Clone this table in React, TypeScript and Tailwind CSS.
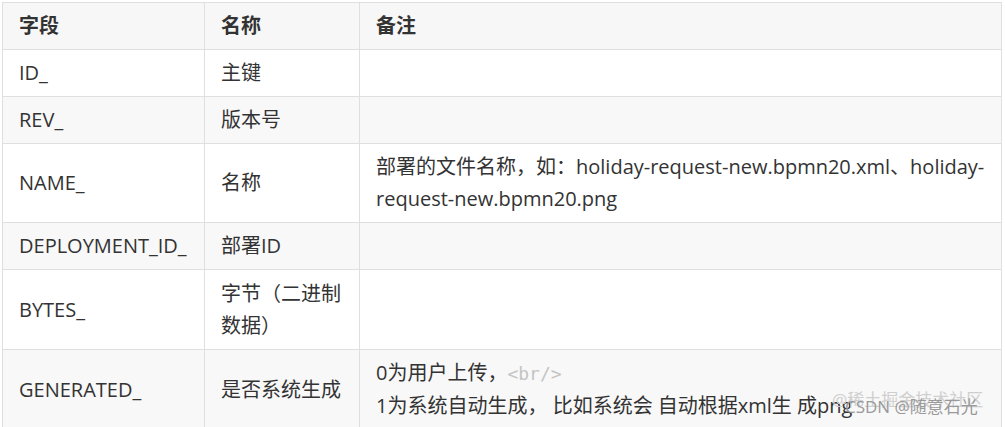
import React from "react";

const font = {
  fontFamily: '"Open Sans", "Noto Sans CJK SC", sans-serif',
};

type Row = { a: React.ReactNode; b: React.ReactNode; c: React.ReactNode; h: string; gray: boolean };

export default function App() {
  const rows: Row[] = [
    { a: "ID_", b: "主键", c: "", h: "h-[47px]", gray: false },
    { a: "REV_", b: "版本号", c: "", h: "h-[47px]", gray: true },
    {
      a: "NAME_",
      b: "名称",
      c: "部署的文件名称，如：holiday-request-new.bpmn20.xml、holiday-request-new.bpmn20.png",
      h: "h-[79px]",
      gray: false,
    },
    { a: "DEPLOYMENT_ID_", b: "部署ID", c: "", h: "h-[47px]", gray: true },
    { a: "BYTES_", b: "字节（二进制数据）", c: "", h: "h-[80px]", gray: false },
    {
      a: "GENERATED_",
      b: "是否系统生成",
      c: (
        <>
          0为用户上传，
          <span className="text-[#c4c4c4] text-[18px]" style={{ fontFamily: '"DejaVu Sans Mono", monospace' }}>
            {"<br/>"}
          </span>
          <br />
          1为系统自动生成， 比如系统会 自动根据xml生 成png
        </>
      ),
      h: "h-[80px]",
      gray: true,
    },
  ];

  const cell = "border-r border-b border-[#dfdfdf] px-4 flex items-center leading-[32px]";

  return (
    <div className="w-[1005px] h-[427px] overflow-hidden bg-white relative" style={font}>
      <div className="ml-[2px] mt-[2px] w-[1000px] border-l border-t border-[#dfdfdf] grid grid-cols-[202px_155px_642px] text-[20px] text-[#333]">
        <div className={`${cell} h-[47px] bg-[#f7f7f7] font-bold`}>字段</div>
        <div className={`${cell} h-[47px] bg-[#f7f7f7] font-bold`}>名称</div>
        <div className={`${cell} h-[47px] bg-[#f7f7f7] font-bold`}>备注</div>
        {rows.map((r, i) => (
          <React.Fragment key={i}>
            <div className={`${cell} ${r.h} ${r.gray ? "bg-[#f8f8f8]" : "bg-white"}`}>{r.a}</div>
            <div className={`${cell} ${r.h} ${r.gray ? "bg-[#f8f8f8]" : "bg-white"}`}>{r.b}</div>
            <div className={`${cell} ${r.h} ${r.gray ? "bg-[#f8f8f8]" : "bg-white"}`}>
              <div>{r.c}</div>
            </div>
          </React.Fragment>
        ))}
      </div>
      <div className="absolute left-[832px] top-[388px] text-[17px] leading-[24px] text-[#cfcfcf] whitespace-nowrap">
        @稀土掘金技术社区
      </div>
      <div className="absolute left-[845px] top-[395px] text-[17px] leading-[24px] text-[#9a9a9a] whitespace-nowrap">
        CSDN @随意石光
      </div>
    </div>
  );
}
